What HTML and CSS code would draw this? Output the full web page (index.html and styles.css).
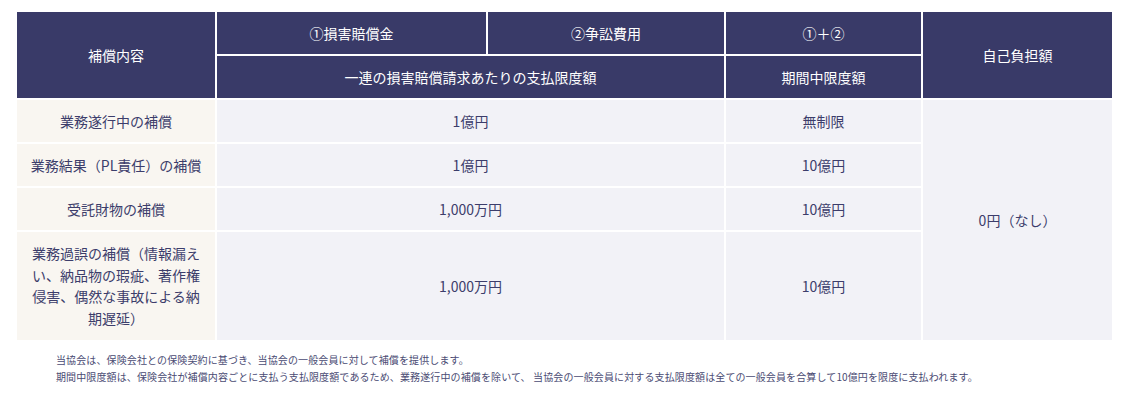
FILE: index.html
```html
<!DOCTYPE html>
<html lang="ja">
<head>
<meta charset="utf-8">
<title>補償内容</title>
<link rel="stylesheet" href="styles.css">
</head>
<body>
<div class="wrap">
  <div class="grid">
    <div class="th c1 r12">補償内容</div>
    <div class="th c2 r1">①損害賠償金</div>
    <div class="th c3 r1">②争訟費用</div>
    <div class="th c4 r1">①＋②</div>
    <div class="th c5 r12">自己負担額</div>
    <div class="th c23 r2">一連の損害賠償請求あたりの支払限度額</div>
    <div class="th c4 r2">期間中限度額</div>

    <div class="label c1 r3">業務遂行中の補償</div>
    <div class="td c23 r3">1億円</div>
    <div class="td c4 r3">無制限</div>
    <div class="td c5 r36">0円（なし）</div>

    <div class="label c1 r4">業務結果（PL責任）の補償</div>
    <div class="td c23 r4">1億円</div>
    <div class="td c4 r4">10億円</div>

    <div class="label c1 r5">受託財物の補償</div>
    <div class="td c23 r5">1,000万円</div>
    <div class="td c4 r5">10億円</div>

    <div class="label c1 r6">業務過誤の補償（情報漏えい、納品物の瑕疵、著作権侵害、偶然な事故による納期遅延）</div>
    <div class="td c23 r6">1,000万円</div>
    <div class="td c4 r6">10億円</div>
  </div>
  <div class="notes">
    <p>当協会は、保険会社との保険契約に基づき、当協会の一般会員に対して補償を提供します。</p>
    <p>期間中限度額は、保険会社が補償内容ごとに支払う支払限度額であるため、業務遂行中の補償を除いて、 当協会の一般会員に対する支払限度額は全ての一般会員を合算して10億円を限度に支払われます。</p>
  </div>
</div>
</body>
</html>
```

FILE: styles.css
```css
* { box-sizing: border-box; }
html, body { margin: 0; padding: 0; background: #fff; }
body {
  font-family: "Noto Sans CJK JP", "Noto Sans", sans-serif;
  color: #3c3d6b;
}
.wrap {
  padding: 12px 26px 0 17px;
}
.grid {
  display: grid;
  grid-template-columns: 198px 269px 236px 195px 189px;
  grid-template-rows: 42px 42px 42px 42px 42px 108px;
  gap: 2px;
  width: 1095px;
}
.grid > div {
  display: flex;
  align-items: center;
  justify-content: center;
  text-align: center;
  font-size: 14px;
  line-height: 1.5;
}
.th {
  background: #393a68;
  color: #ffffff;
}
.label {
  background: #f9f6f1;
  color: #3c3d6b;
  padding: 0 10px;
}
.td {
  background: #f2f2f7;
  color: #3c3d6b;
}
.r6.label { line-height: 21.5px; }

.c1 { grid-column: 1; }
.c2 { grid-column: 2; }
.c3 { grid-column: 3; }
.c4 { grid-column: 4; }
.c5 { grid-column: 5; }
.c23 { grid-column: 2 / 4; }
.r1 { grid-row: 1; }
.r2 { grid-row: 2; }
.r12 { grid-row: 1 / 3; }
.r3 { grid-row: 3; }
.r4 { grid-row: 4; }
.r5 { grid-row: 5; }
.r6 { grid-row: 6; }
.r36 { grid-row: 3 / 7; }

.notes {
  margin-top: 11px;
  padding-left: 39px;
  font-size: 10px;
  line-height: 17px;
  letter-spacing: 0.12px;
  color: #4a4b73;
}
.notes p { margin: 0; }
```
